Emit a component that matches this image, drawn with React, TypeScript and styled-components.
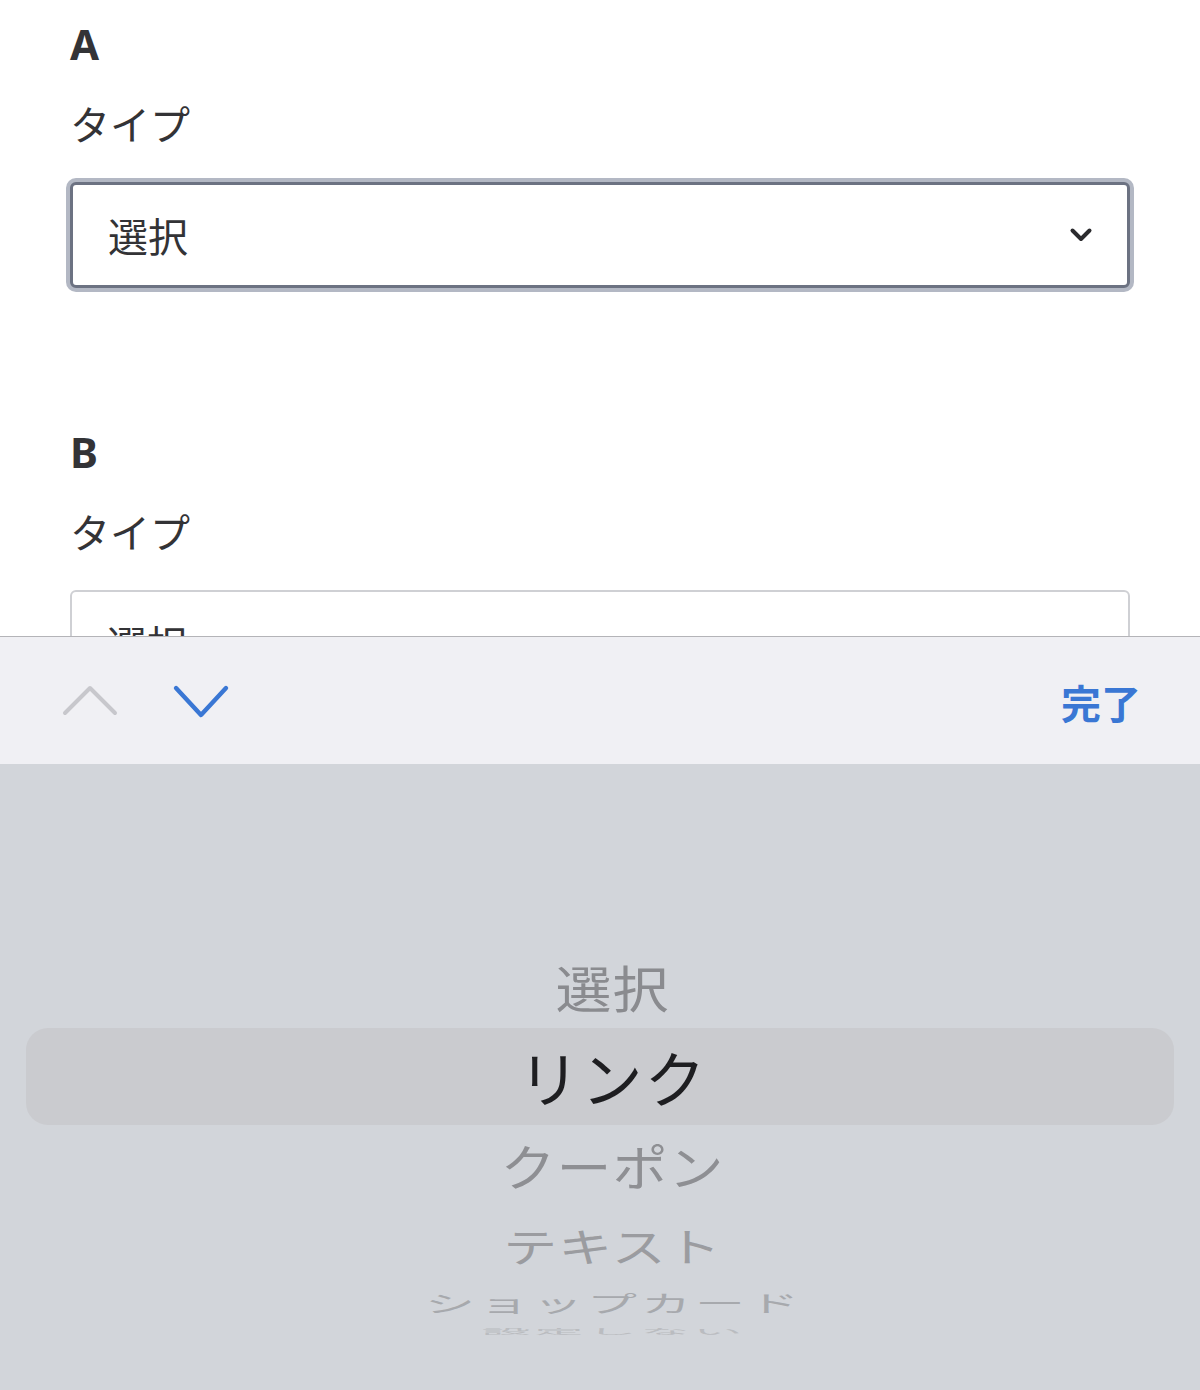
import React from "react";
import styled, { createGlobalStyle } from "styled-components";

const GlobalStyle = createGlobalStyle`
  html, body { margin: 0; padding: 0; background: #ffffff; }
  body { font-family: "Noto Sans", "Noto Sans CJK JP", sans-serif; }
  * { box-sizing: border-box; }
`;

const Screen = styled.div`
  width: 1200px;
  height: 1390px;
  display: flex;
  flex-direction: column;
  overflow: hidden;
`;

const Content = styled.div`
  height: 636px;
  flex: none;
  overflow: hidden;
  padding: 23px 70px 0 70px;
  display: flex;
  flex-direction: column;
  gap: 143px;
  background: #ffffff;
`;

const Section = styled.section`
  display: flex;
  flex-direction: column;
`;

const Heading = styled.h2`
  margin: 0 0 38px 0;
  font-family: "Noto Sans", "Noto Sans CJK JP", sans-serif;
  font-weight: 700;
  font-size: 42px;
  line-height: 1;
  color: #333336;
`;

const Label = styled.div`
  margin: 0 0 39px 0;
  font-family: "Noto Sans CJK JP", sans-serif;
  font-weight: 400;
  font-size: 40px;
  line-height: 1;
  color: #333336;
`;

const SelectBox = styled.div<{ $focused?: boolean }>`
  height: 106px;
  width: 1060px;
  display: flex;
  align-items: center;
  justify-content: space-between;
  padding: 0 34px 0 35px;
  background: #ffffff;
  border-radius: 6px;
  border: ${(p) => (p.$focused ? "3px solid #6c7282" : "2px solid #cfd0d4")};
  box-shadow: ${(p) => (p.$focused ? "0 0 0 4px #b3b8c4" : "none")};
`;

const SelectText = styled.span`
  font-family: "Noto Sans CJK JP", sans-serif;
  font-size: 40px;
  line-height: 1;
  color: #333336;
`;

const Keyboard = styled.div`
  flex: 1;
  display: flex;
  flex-direction: column;
`;

const Toolbar = styled.div`
  height: 128px;
  flex: none;
  display: flex;
  align-items: center;
  padding: 0 59px 0 60px;
  background: #f0f0f4;
  border-top: 1px solid #b4b4b8;
`;

const NavGroup = styled.div`
  display: flex;
  align-items: center;
  gap: 51px;
  flex: 1;
`;

const DoneButton = styled.span`
  font-family: "Noto Sans CJK JP", sans-serif;
  font-weight: 700;
  font-size: 40px;
  line-height: 1;
  color: #3a77d4;
  margin-top: 2px;
`;

const Picker = styled.div`
  flex: 1;
  display: flex;
  flex-direction: column;
  padding-top: 180px;
  background: #d2d5da;
`;

const PickerRow = styled.div<{ $h: number; $selected?: boolean }>`
  height: ${(p) => p.$h}px;
  flex: none;
  display: flex;
  align-items: center;
  justify-content: center;
  margin: 0 26px;
  padding-left: 24px;
  border-radius: 22px;
  background: ${(p) => (p.$selected ? "#cacbcf" : "transparent")};
`;

const PickerText = styled.span<{
  $size: number;
  $color: string;
  $scale: number;
  $spacing: number;
}>`
  display: inline-block;
  font-family: "Noto Sans CJK JP", sans-serif;
  font-weight: 400;
  font-size: ${(p) => p.$size}px;
  line-height: 1;
  letter-spacing: ${(p) => p.$spacing}px;
  margin-right: ${(p) => -p.$spacing}px;
  color: ${(p) => p.$color};
  transform: scaleY(${(p) => p.$scale});
  white-space: nowrap;
`;

const SelectChevron = () => (
  <svg width="24" height="16" viewBox="0 0 24 16">
    <polyline
      points="3.5,3.5 12,12 20.5,3.5"
      fill="none"
      stroke="#2b2b2e"
      strokeWidth="4"
      strokeLinecap="round"
      strokeLinejoin="round"
    />
  </svg>
);

const UpIcon = () => (
  <svg width="60" height="36" viewBox="0 0 60 36">
    <polyline
      points="5,30 30,5 55,30"
      fill="none"
      stroke="#c7c7cc"
      strokeWidth="4"
      strokeLinecap="round"
      strokeLinejoin="round"
    />
  </svg>
);

const DownIcon = () => (
  <svg width="60" height="36" viewBox="0 0 60 36">
    <polyline
      points="5,5 30,32 55,5"
      fill="none"
      stroke="#3a77d4"
      strokeWidth="4.4"
      strokeLinecap="round"
      strokeLinejoin="round"
    />
  </svg>
);

type Item = {
  text: string;
  h: number;
  size: number;
  color: string;
  scale: number;
  spacing: number;
  selected?: boolean;
};

const items: Item[] = [
  { text: "選択", h: 84, size: 56, color: "#8a8b8f", scale: 0.9, spacing: 1 },
  { text: "リンク", h: 97, size: 61, color: "#1e1e21", scale: 1, spacing: 2, selected: true },
  { text: "クーポン", h: 81, size: 55, color: "#8e8f93", scale: 0.88, spacing: 1 },
  { text: "テキスト", h: 78, size: 54, color: "#9b9ca0", scale: 0.74, spacing: 1 },
  { text: "ショップカード", h: 36, size: 50, color: "#a7a9ad", scale: 0.46, spacing: 4 },
  { text: "設定しない", h: 20, size: 49, color: "#babcc0", scale: 0.15, spacing: 4 },
];

export default function App() {
  return (
    <Screen>
      <GlobalStyle />
      <Content>
        <Section>
          <Heading>A</Heading>
          <Label>タイプ</Label>
          <SelectBox $focused>
            <SelectText>選択</SelectText>
            <SelectChevron />
          </SelectBox>
        </Section>
        <Section>
          <Heading>B</Heading>
          <Label>タイプ</Label>
          <SelectBox>
            <SelectText>選択</SelectText>
            <SelectChevron />
          </SelectBox>
        </Section>
      </Content>
      <Keyboard>
        <Toolbar>
          <NavGroup>
            <UpIcon />
            <DownIcon />
          </NavGroup>
          <DoneButton>完了</DoneButton>
        </Toolbar>
        <Picker>
          {items.map((it) => (
            <PickerRow key={it.text} $h={it.h} $selected={it.selected}>
              <PickerText
                $size={it.size}
                $color={it.color}
                $scale={it.scale}
                $spacing={it.spacing}
              >
                {it.text}
              </PickerText>
            </PickerRow>
          ))}
        </Picker>
      </Keyboard>
    </Screen>
  );
}
